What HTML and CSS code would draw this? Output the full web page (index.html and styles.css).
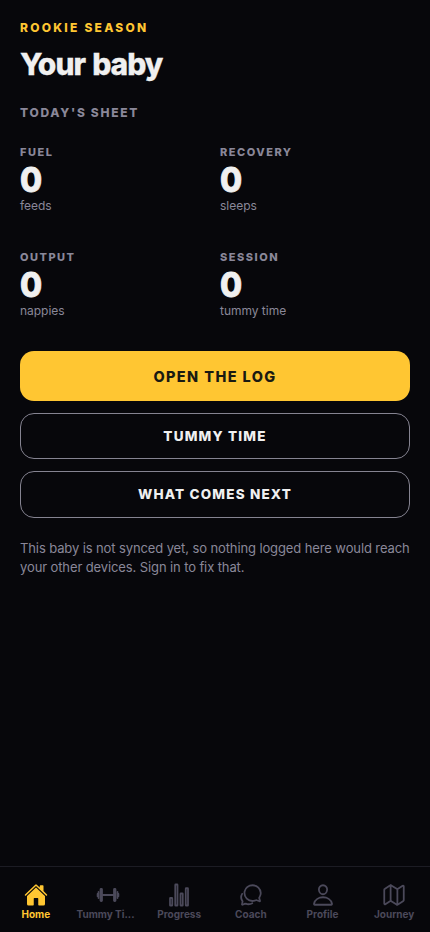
FILE: index.html
```html
<!DOCTYPE html>
<html lang="en">
<head>
<meta charset="utf-8">
<title>Your baby</title>
<link rel="stylesheet" href="styles.css">
</head>
<body>
<div class="app">
<main class="content">
  <p class="eyebrow">ROOKIE SEASON</p>
  <h1 class="title">Your baby</h1>
  <h2 class="section">TODAY'S SHEET</h2>
  <div class="stats">
    <div class="stat"><span class="label">FUEL</span><span class="value">0</span><span class="unit">feeds</span></div>
    <div class="stat"><span class="label">RECOVERY</span><span class="value">0</span><span class="unit">sleeps</span></div>
    <div class="stat"><span class="label">OUTPUT</span><span class="value">0</span><span class="unit">nappies</span></div>
    <div class="stat"><span class="label">SESSION</span><span class="value">0</span><span class="unit">tummy time</span></div>
  </div>
  <div class="actions">
    <button class="btn primary">OPEN THE LOG</button>
    <button class="btn">TUMMY TIME</button>
    <button class="btn">WHAT COMES NEXT</button>
  </div>
  <p class="note">This baby is not synced yet, so nothing logged here would reach your other devices. Sign in to fix that.</p>
</main>
<nav class="tabs">
  <a class="tab active"><svg class="icon solid" viewBox="0 0 512 512"><path d="M261.56 101.28a8 8 0 00-11.06 0L66.4 277.15a8 8 0 00-2.47 5.79L63.9 448a32 32 0 0032 32H192a16 16 0 0016-16V328a8 8 0 018-8h80a8 8 0 018 8v136a16 16 0 0016 16h96.06a32 32 0 0032-32V282.94a8 8 0 00-2.47-5.79z"/><path d="M490.91 244.15l-74.8-71.56V64a16 16 0 00-16-16h-48a16 16 0 00-16 16v32l-57.92-55.38C272.77 35.14 264.71 32 256 32c-8.68 0-16.72 3.14-22.14 8.63l-212.7 203.5c-6.22 6-7 15.87-1.34 22.37A16 16 0 0043 267.56L250.5 69.28a8 8 0 0111.06 0l207.52 198.28a16 16 0 0022.59-.44c6.14-6.36 5.63-16.86-.76-22.97z"/></svg><span class="name">Home</span></a>
  <a class="tab"><svg class="icon" viewBox="0 0 512 512"><path d="M128 256h256M54 192v128M458 192v128M34 232v48M478 232v48"/><rect x="384" y="128" width="32" height="256" rx="12"/><rect x="96" y="128" width="32" height="256" rx="12"/></svg><span class="name clipped">Tummy Ti...</span></a>
  <a class="tab"><svg class="icon" viewBox="0 0 512 512"><rect x="64" y="320" width="48" height="160" rx="8"/><rect x="288" y="224" width="48" height="256" rx="8"/><rect x="400" y="112" width="48" height="368" rx="8"/><rect x="176" y="32" width="48" height="448" rx="8"/></svg><span class="name">Progress</span></a>
  <a class="tab"><svg class="icon" viewBox="0 0 512 512"><path d="M431 320.6c-1-3.6 1.2-8.6 3.3-12.2a33.68 33.68 0 012.1-3.1A162 162 0 00464 215c.3-92.2-77.5-167-173.7-167-83.9 0-153.9 57.1-170.3 132.9a160.7 160.7 0 00-3.7 34.2c0 92.3 74.8 169.1 171 169.1 15.3 0 35.9-4.6 47.2-7.7s22.5-7.2 25.4-8.3a26.44 26.44 0 019.3-1.7 26 26 0 0110.1 2l56.7 20.1a13.52 13.52 0 003.9 1 8 8 0 008-8 12.85 12.85 0 00-.5-2.7z"/><path d="M66.46 232a146.23 146.23 0 006.39 152.67c2.31 3.49 3.61 6.19 3.21 8s-11.93 61.87-11.93 61.87a8 8 0 002.71 7.68A8.17 8.17 0 0072 464a7.26 7.26 0 002.91-.6l56.21-22a15.7 15.7 0 0112 .2c18.94 7.38 39.88 12 60.83 12A159.21 159.21 0 00284 432.11"/></svg><span class="name">Coach</span></a>
  <a class="tab"><svg class="icon" viewBox="0 0 512 512"><path d="M344 144c-3.92 52.87-44 96-88 96s-84.15-43.12-88-96c-4-55 35-96 88-96s92 42 88 96z"/><path d="M256 304c-87 0-175.3 48-191.64 138.6C62.39 453.52 68.57 464 80 464h352c11.44 0 17.62-10.48 15.65-21.4C431.3 352 343 304 256 304z"/></svg><span class="name">Profile</span></a>
  <a class="tab"><svg class="icon" viewBox="0 0 512 512"><path d="M313.27 124.64L198.73 51.36a32 32 0 00-29.28.35L56.51 127.49A16 16 0 0048 141.63v295.8a16 16 0 0023.49 14.14l97.82-63.79a32 32 0 0129.5-.24l111.86 73a32 32 0 0029.27-.11l115.43-75.94a16 16 0 008.63-14.2V74.57a16 16 0 00-23.49-14.14l-98 63.86a32 32 0 01-29.24.35zM328 128.03v336M184 48v336"/></svg><span class="name">Journey</span></a>
</nav>
</div>
</body>
</html>
```
FILE: styles.css
```css
* { box-sizing: border-box; }
body { margin: 0; background: #07070b; font-family: Inter, sans-serif; color: #f0f0f0; }
.app { height: 932px; display: flex; flex-direction: column; }
.content { flex: 1; padding: 20px 20px 0; }
.eyebrow { margin: 0; font-size: 12px; line-height: 15px; font-weight: 800; letter-spacing: 2.24px; color: #ffc632; }
.title { margin: 9px 0 0; font-size: 30px; line-height: 40px; font-weight: 800; letter-spacing: -1px; word-spacing: 1.5px; -webkit-text-stroke: .3px currentColor; }
.section { margin: 21px 0 0; font-size: 12px; line-height: 15px; font-weight: 800; letter-spacing: 1.7px; color: #8a8799; }
.stats { margin-top: 25px; display: grid; grid-template-columns: 190px 190px; column-gap: 10px; row-gap: 37px; }
.stat { display: flex; flex-direction: column; height: 68px; }
.label { font-size: 11px; line-height: 14px; font-weight: 800; letter-spacing: 1.5px; color: #8a8799; }
.value { margin-top: 2px; font-size: 34px; line-height: 38px; font-weight: 800; -webkit-text-stroke: .8px currentColor; transform: scaleX(.94); transform-origin: 0 50%; }
.unit { margin-top: -1px; font-size: 12px; line-height: 16px; letter-spacing: -.02px; color: #8a8799; }
.actions { margin-top: 33.4px; display: flex; flex-direction: column; gap: 12px; }
.btn { height: 46.5px; border: 1px solid #858391; border-radius: 14px; background: none; color: #f0f0f0; font: 800 13.5px/17px Inter, sans-serif; letter-spacing: 1.18px; padding: 0; }
.primary { height: 49.6px; background: #ffc632; border: 0; color: #1a1a12; font-size: 14.5px; letter-spacing: 1.4px; }
.note { margin: 21px 0 0; font-size: 13px; line-height: 19px; letter-spacing: -.11px; color: #8a8799; }
.tabs { height: 66px; border-top: 1px solid #1c1c24; display: flex; padding-top: 16px; }
.tab { flex: 1; min-width: 0; display: flex; flex-direction: column; align-items: center; color: #4b495a; }
.active { color: #ffc632; }
.icon { width: 24px; height: 24px; fill: none; stroke: currentColor; stroke-width: 38; stroke-linejoin: round; stroke-linecap: round; }
.solid { fill: currentColor; stroke: none; }
.name { font-size: 10px; line-height: 14px; font-weight: 700; white-space: nowrap; }
.clipped { padding-right: 4px; }
```
